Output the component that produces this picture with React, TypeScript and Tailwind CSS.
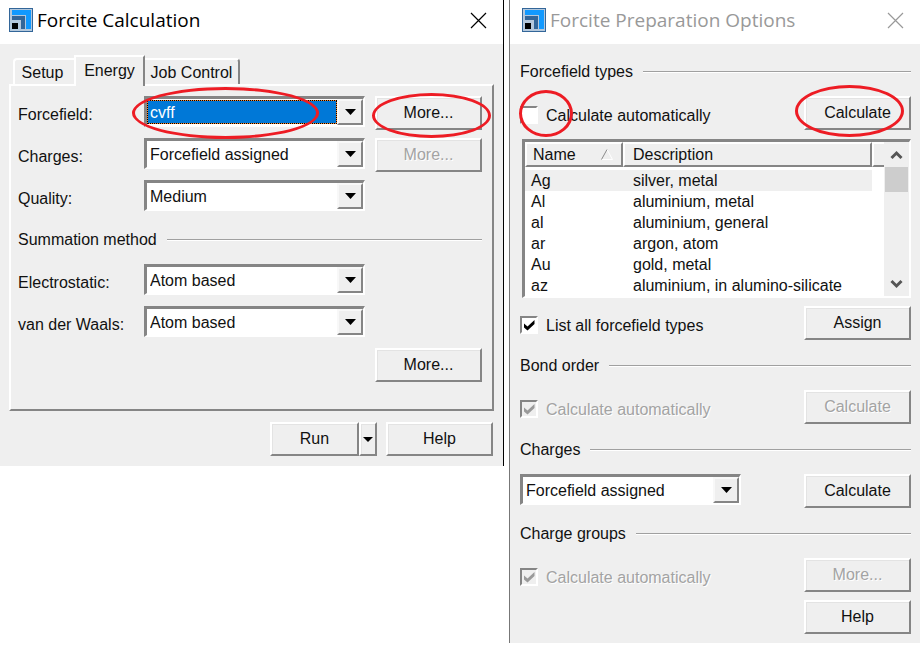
import React from "react";

function AppIcon() {
  return (
    <svg width="24" height="24" viewBox="0 0 24 24" aria-hidden="true" className="shrink-0" shapeRendering="crispEdges">
      <rect width="24" height="24" fill="#336699" />
      <rect x="1" y="1" width="22" height="22" fill="#b4c8dc" />
      <path d="M3 2h19v19h-5V7H3z" fill="#1199ff" />
      <path d="M3 8h13v13h-4v-9H3z" fill="#336699" />
      <rect x="3" y="15" width="6" height="6" fill="#000" />
    </svg>
  );
}

function Bevel({ children, disabled = false, className = "w-[107px]", label }: { children: React.ReactNode; disabled?: boolean; className?: string; label?: string }) {
  return (
    <button
      type="button"
      disabled={disabled}
      aria-label={label}
      className={`flex h-[34px] shrink-0 items-center justify-center border-2 border-t-white border-l-white border-r-[#858585] border-b-[#858585] bg-[#efefef] shadow-[inset_1px_1px_0_#e3e3e3] disabled:text-[#a3a3a3] disabled:[text-shadow:1px_1px_0_#fff] ${className}`}
    >
      {children}
    </button>
  );
}

function DownArrow() {
  return (
    <svg width="11" height="6" viewBox="0 0 11 6" aria-hidden="true">
      <path d="M0 0h11L5.500 6z" fill="#000" />
    </svg>
  );
}

function Combo({ id, value, label, active = false }: { id: string; value: string; label?: string; active?: boolean }) {
  return (
    <div className="flex h-[31px] min-w-0 border-t-[3px] border-r-2 border-b-2 border-l-[3px] border-t-[#858585] border-r-white border-b-white border-l-[#858585] bg-white">
      <select
        id={id}
        aria-label={label}
        defaultValue={value}
        className={`min-w-0 flex-1 appearance-none pt-0.5 outline-none ${active ? "my-px border border-dotted border-black pl-0.5 leading-5 text-white [background:linear-gradient(#0078d7,#0078d7)_padding-box,#ff8728]" : "bg-white pl-[3px]"}`}
      >
        <option>{value}</option>
      </select>
      <span className="flex w-[26px] items-center justify-center border-2 border-t-[#f8f8f8] border-r-[#858585] border-b-[#858585] border-l-[#f8f8f8] bg-[#efefef]">
        <DownArrow />
      </span>
    </div>
  );
}

function Field({ id, label, value, active, children }: { id: string; label: string; value: string; active?: boolean; children?: React.ReactNode }) {
  return (
    <div className="relative grid h-[42px] grid-cols-[116px_1fr_107px] items-start gap-x-2.5">
      <label htmlFor={id} className="leading-[38px]">{label}</label>
      <Combo id={id} value={value} active={active} />
      {children}
    </div>
  );
}

function Heading({ children }: { children: React.ReactNode }) {
  return (
    <h2 className="flex h-[42px] items-center gap-2.5 pb-1.5">
      {children}
      <span className="h-0.5 flex-1 border-t border-b border-t-[#a0a0a0] border-b-white" />
    </h2>
  );
}

function Check({ id, label, checked = false, disabled = false }: { id: string; label: string; checked?: boolean; disabled?: boolean }) {
  return (
    <div className="flex h-[38px] flex-1 items-center gap-2">
      <span className="grid">
        <input
          id={id}
          type="checkbox"
          defaultChecked={checked}
          disabled={disabled}
          className="col-start-1 row-start-1 size-[18px] appearance-none border-2 border-t-[#858585] border-r-white border-b-white border-l-[#858585] bg-white disabled:bg-[#efefef]"
        />
        {checked && (
          <svg width="18" height="18" viewBox="0 0 18 18" aria-hidden="true" className="pointer-events-none col-start-1 row-start-1">
            <path d="M4 7.500L7.500 10.500L14.500 4V8L7.500 14.500L4 11.500z" fill={disabled ? "#9a9a9a" : "#000"} />
          </svg>
        )}
      </span>
      <label htmlFor={id} className={`pt-0.5 ${disabled ? "text-[#a3a3a3] [text-shadow:1px_1px_0_#fff]" : ""}`}>{label}</label>
    </div>
  );
}

function TitleBar({ title, inactive = false }: { title: string; inactive?: boolean }) {
  return (
    <header className={`flex h-11 items-center justify-between bg-white pb-1 ${inactive ? "pr-4 pl-3 text-[#999999]" : "pr-4 pl-[9px] text-black"}`}>
      <div className="flex items-center gap-1">
        <AppIcon />
        <h1 className="font-['Open_Sans','Noto_Sans',sans-serif] text-[19px] leading-6">{title}</h1>
      </div>
      <button type="button" aria-label="Close">
        <svg width="17" height="17" viewBox="0 0 17 17" aria-hidden="true">
          <path d="M1 1L16 16M16 1L1 16" stroke="currentColor" strokeWidth="1.200" fill="none" />
        </svg>
      </button>
    </header>
  );
}

const ring = "pointer-events-none absolute z-20 rounded-[50%] border-3 border-[#ed1c24]";

function Calculation() {
  return (
    <section className="border-r border-black bg-[#efefef] pb-2.5">
      <TitleBar title="Forcite Calculation" />
      <div className="px-[9px] pt-[11px]">
        <div role="tablist" className="flex h-[29px] items-end pl-1">
          <button type="button" role="tab" aria-selected="false" className="h-[26px] w-[61px] rounded-tl-sm border-t-2 border-l-2 border-white pt-0.5 pr-1">Setup</button>
          <button type="button" role="tab" aria-selected="true" className="z-10 -mb-0.5 h-[31px] w-[71px] self-start border-t-2 border-r-2 border-l-2 border-t-white border-r-[#858585] border-l-white bg-[#efefef] pb-0.5">Energy</button>
          <button type="button" role="tab" aria-selected="false" className="h-[26px] w-[95px] rounded-tr-sm border-t-2 border-r-2 border-t-white border-r-[#858585] pt-0.5">Job Control</button>
        </div>
        <div role="tabpanel" className="border-2 border-t-white border-r-[#858585] border-b-[#858585] border-l-white pt-2.5 pr-2.5 pb-[19px] pl-[7px]">
          <Field id="forcefield" label="Forcefield:" value="cvff" active>
            <Bevel>More...</Bevel>
            <span className={`${ring} -top-[9px] right-[163px] left-[114px] h-[52px]`} />
            <span className={`${ring} -top-[3px] -right-[9px] h-[45px] w-[119px]`} />
          </Field>
          <Field id="charges" label="Charges:" value="Forcefield assigned"><Bevel disabled>More...</Bevel></Field>
          <Field id="quality" label="Quality:" value="Medium" />
          <Heading>Summation method</Heading>
          <Field id="electrostatic" label="Electrostatic:" value="Atom based" />
          <Field id="vdw" label="van der Waals:" value="Atom based" />
          <div className="flex h-[42px] items-start justify-end"><Bevel>More...</Bevel></div>
        </div>
        <div className="flex justify-end gap-[9px] pt-[11px] pr-px">
          <div className="flex">
            <Bevel className="w-[89px]">Run</Bevel>
            <Bevel className="w-[18px]" label="Run options">
              <svg width="10" height="5" viewBox="0 0 10 5" aria-hidden="true" className="shrink-0"><path d="M0 0h10L5 5z" /></svg>
            </Bevel>
          </div>
          <Bevel>Help</Bevel>
        </div>
      </div>
    </section>
  );
}

const types = [
  ["Ag", "silver, metal"],
  ["Al", "aluminium, metal"],
  ["al", "aluminium, general"],
  ["ar", "argon, atom"],
  ["Au", "gold, metal"],
  ["az", "aluminium, in alumino-silicate"],
];

const th = "border-2 border-t-white border-r-[#858585] border-b-[#858585] border-l-white bg-[#efefef] p-0 text-left font-normal";

function TypeList() {
  return (
    <div className="mt-px mb-2 ml-0.5 flex h-[159px] border-t-[3px] border-r-2 border-b-2 border-l-[3px] border-t-[#858585] border-r-white border-b-white border-l-[#858585] bg-white">
      <table className="flex-1 table-fixed border-separate border-spacing-0 self-start leading-[21px]">
        <thead>
          <tr className="h-[25px]">
            <th className={`${th} w-[98px]`}>
              <div className="flex items-center justify-between pr-2 pl-1.5">
                Name
                <svg width="12" height="11" viewBox="0 0 12 11" aria-hidden="true">
                  <path d="M6 .5L11.500 10.500H.5" fill="none" stroke="#fff" />
                  <path d="M.5 10.500L6 .5" stroke="#8a8a8a" />
                </svg>
              </div>
            </th>
            <th className={`${th} pl-2`}>Description</th>
            <th aria-label="Spare column" className={`${th} w-3 border-r-0`} />
          </tr>
          <tr aria-hidden="true" className="h-[3px]" />
        </thead>
        <tbody>
          {types.map(([name, text], i) => (
            <tr key={name} className={i === 0 ? "bg-[linear-gradient(90deg,#efefef_calc(100%-12px),#fff_0)]" : ""}>
              <td className="p-0 pl-1.5">{name}</td>
              <td className="p-0 pl-2.5 whitespace-nowrap">{text}</td>
              <td />
            </tr>
          ))}
        </tbody>
      </table>
      <div className="flex w-[25px] flex-col items-center bg-[#efefef]">
        <svg width="23" height="25" viewBox="0 0 23 25" fill="none" aria-hidden="true"><path d="M6.500 16L11.500 11L16.500 16" stroke="#555" strokeWidth="3" /></svg>
        <span className="h-[25px] w-[23px] bg-[#cdcdcd]" />
        <svg width="23" height="25" viewBox="0 0 23 25" fill="none" aria-hidden="true" className="mt-auto"><path d="M6.500 10L11.500 15L16.500 10" stroke="#555" strokeWidth="3" /></svg>
      </div>
    </div>
  );
}

function Preparation() {
  const row = "relative flex h-[42px] items-start";
  return (
    <section className="border-l border-[#777777] bg-[#efefef] pb-[9px]">
      <TitleBar title="Forcite Preparation Options" inactive />
      <div className="pt-2.5 pr-[9px] pl-2.5">
        <Heading>Forcefield types</Heading>
        <div className={row}>
          <Check id="auto-types" label="Calculate automatically" />
          <Bevel>Calculate</Bevel>
          <span className={`${ring} -top-1.5 -left-px h-[47px] w-[54px]`} />
          <span className={`${ring} -top-[11px] right-[7px] h-[52px] w-[109px]`} />
        </div>
        <TypeList />
        <div className={row}>
          <Check id="list-all" label="List all forcefield types" checked />
          <Bevel>Assign</Bevel>
        </div>
        <Heading>Bond order</Heading>
        <div className={row}>
          <Check id="auto-bonds" label="Calculate automatically" checked disabled />
          <Bevel disabled>Calculate</Bevel>
        </div>
        <Heading>Charges</Heading>
        <div className={`${row} justify-between gap-4`}>
          <div className="w-[221px]"><Combo id="prep-charges" label="Charges" value="Forcefield assigned" /></div>
          <Bevel>Calculate</Bevel>
        </div>
        <Heading>Charge groups</Heading>
        <div className={row}>
          <Check id="auto-groups" label="Calculate automatically" checked disabled />
          <Bevel disabled>More...</Bevel>
        </div>
        <div className="flex justify-end"><Bevel>Help</Bevel></div>
      </div>
    </section>
  );
}

export default function App() {
  return (
    <main className="grid min-h-screen grid-cols-[504fr_411fr] items-start gap-[5px] bg-white font-['Liberation_Sans',Arial,sans-serif] text-base leading-5 text-[#111111]">
      <Calculation />
      <Preparation />
    </main>
  );
}
